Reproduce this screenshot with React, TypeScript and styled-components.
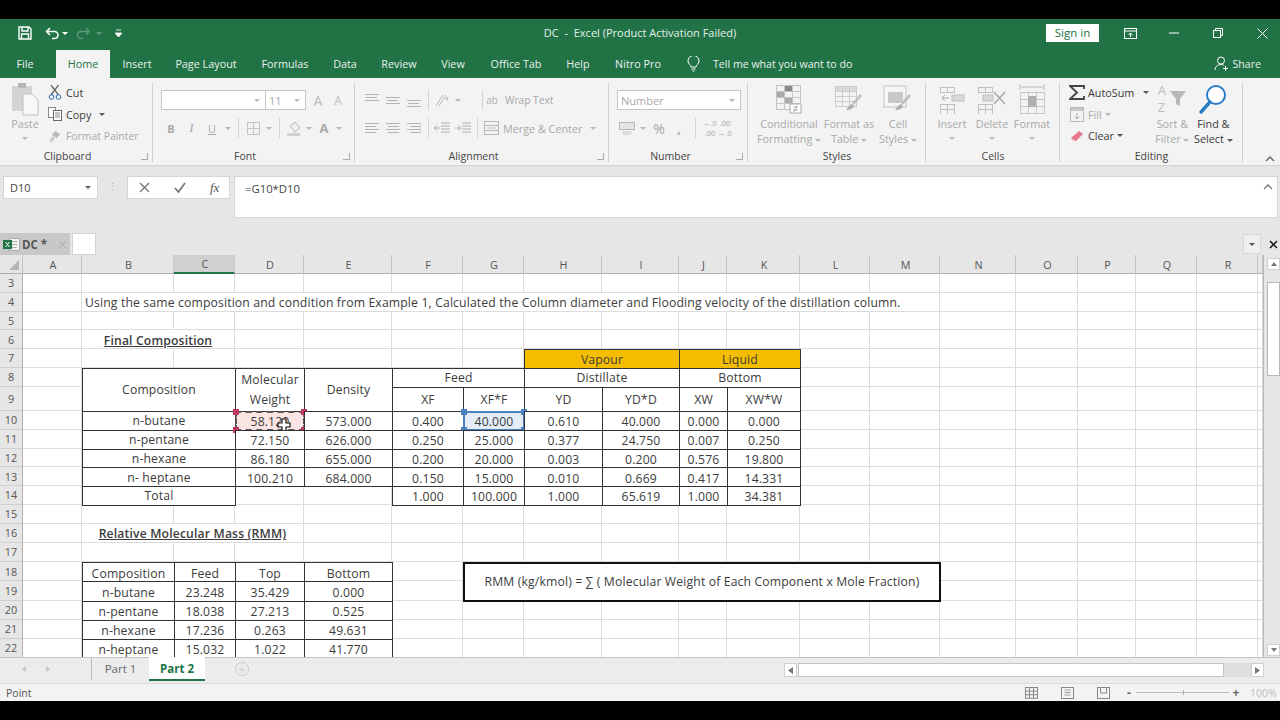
import * as React from "react";
import styled, { createGlobalStyle } from "styled-components";

const UI = `"Open Sans", "Noto Sans", sans-serif`;
const SHEET = `"Open Sans", "Noto Sans", sans-serif`;
const GREEN = "#217346";
const FADED = "#a9a9a9";
const ICON = "#bdbdbd";

const Global = createGlobalStyle`
  html, body { margin: 0; padding: 0; background: #000; }
  body { font-family: ${UI}; width: 1280px; height: 720px; overflow: hidden; }
`;

const Frame = styled.div`
  width: 1280px;
  height: 720px;
  display: flex;
  flex-direction: column;
  background: #000;
  padding: 19px 0;
  box-sizing: border-box;
`;

const Window = styled.div`
  height: 682px;
  display: flex;
  flex-direction: column;
  background: #e6e6e6;
  overflow: hidden;
`;

/* ---- title bar ---- */
const TitleBar = styled.div`
  height: 28px;
  background: ${GREEN};
  display: grid;
  grid-template-columns: 1fr auto 1fr;
  align-items: center;
  color: #fff;
`;

const Qat = styled.div`
  display: flex;
  align-items: center;
  padding-left: 16px;
`;

const QatSlot = styled.div<{ $w: number }>`
  width: ${(p) => p.$w}px;
  display: flex;
  align-items: center;
  justify-content: center;
`;

const TitleText = styled.div`
  font-size: 11px;
  color: #e6f0ea;
  white-space: pre;
  margin-top: -1px;
`;

const WinControls = styled.div`
  display: flex;
  align-items: center;
  justify-content: flex-end;
  margin-right: -4px;
`;

const SignIn = styled.div`
  width: 53px;
  height: 18px;
  background: #fff;
  color: ${GREEN};
  font-size: 11.5px;
  line-height: 18px;
  text-align: center;
  margin-right: 9px;
`;

const WinSlot = styled.div`
  width: 44px;
  display: flex;
  justify-content: center;
  align-items: center;
`;

/* ---- tab row ---- */
const TabRow = styled.div`
  height: 31px;
  background: ${GREEN};
  display: flex;
  align-items: flex-end;
`;

const RibbonTab = styled.div<{ $w: number; $active?: boolean; $gap?: number }>`
  width: ${(p) => p.$w}px;
  margin-right: ${(p) => p.$gap ?? 0}px;
  height: 28px;
  line-height: 27px;
  text-align: center;
  font-size: 10.8px;
  color: ${(p) => (p.$active ? GREEN : "#e8f1ec")};
  background: ${(p) => (p.$active ? "#f3f3f3" : "transparent")};
`;

const TellMe = styled.div`
  height: 28px;
  display: flex;
  align-items: center;
  gap: 13px;
  margin-left: 11px;
  font-size: 10.6px;
  color: #e8f1ec;
  padding-bottom: 1px;
  box-sizing: border-box;
`;

const Share = styled.div`
  margin-left: auto;
  margin-right: 19px;
  height: 28px;
  display: flex;
  align-items: center;
  gap: 4px;
  font-size: 10.6px;
  color: #e8f1ec;
  padding-bottom: 1px;
  box-sizing: border-box;
`;

/* ---- ribbon ---- */
const Ribbon = styled.div`
  height: 87px;
  background: #f3f3f3;
  display: flex;
  padding-top: 3px;
  box-sizing: border-box;
  box-shadow: 0 1px 1px #d4d4d4;
  font-size: 10.8px;
  color: ${FADED};
`;

const Group = styled.div<{ $w: number }>`
  width: ${(p) => p.$w}px;
  height: 84px;
  display: flex;
  flex-direction: column;
  position: relative;
  flex: none;
  &::after {
    content: "";
    position: absolute;
    right: 0;
    top: 2px;
    bottom: 3px;
    width: 1px;
    background: #d0d0d0;
  }
`;

const GroupBody = styled.div<{ $pl?: number; $pt?: number }>`
  height: 66px;
  display: flex;
  padding-left: ${(p) => p.$pl ?? 0}px;
  padding-top: ${(p) => p.$pt ?? 0}px;
  box-sizing: border-box;
`;

const GroupLabel = styled.div<{ $pr?: number }>`
  height: 18px;
  line-height: 18px;
  font-size: 10.5px;
  color: #444;
  text-align: center;
  position: relative;
  padding-right: ${(p) => p.$pr ?? 0}px;
`;

const Launcher = styled.span`
  position: absolute;
  right: 5px;
  top: 6px;
  width: 6px;
  height: 6px;
  border-right: 1px solid #aaa;
  border-bottom: 1px solid #aaa;
`;

const Stack = styled.div<{ $gap?: number; $ml?: number }>`
  display: flex;
  flex-direction: column;
  gap: ${(p) => p.$gap ?? 0}px;
  margin-left: ${(p) => p.$ml ?? 0}px;
`;

const ToolRow = styled.div<{ $h?: number }>`
  height: ${(p) => p.$h ?? 20}px;
  display: flex;
  align-items: center;
  white-space: nowrap;
`;

const Slot = styled.div<{ $w: number; $ml?: number }>`
  width: ${(p) => p.$w}px;
  margin-left: ${(p) => p.$ml ?? 0}px;
  flex: none;
  display: flex;
  align-items: center;
  justify-content: center;
`;

const Glyph = styled(Slot)<{ $size?: number; $bold?: boolean; $italic?: boolean; $under?: boolean; $c?: string }>`
  color: ${(p) => p.$c ?? "#aaa"};
  font-size: ${(p) => p.$size ?? 11}px;
  font-weight: ${(p) => (p.$bold ? 700 : 400)};
  font-style: ${(p) => (p.$italic ? "italic" : "normal")};
  text-decoration: ${(p) => (p.$under ? "underline" : "none")};
  font-family: ${(p) => (p.$italic ? `"Liberation Serif", serif` : "inherit")};
`;

const Decimals = styled(Slot)`
  color: #a8a8a8;
  font-size: 7.5px;
  line-height: 10px;
  text-align: center;
`;

const AbMark = styled.span`
  color: #b0b0b0;
  font-size: 10px;
  width: 18px;
  text-align: center;
`;

const ToolText = styled.span<{ $on?: boolean; $ml?: number; $size?: number }>`
  color: ${(p) => (p.$on ? "#3a3a3a" : FADED)};
  margin-left: ${(p) => p.$ml ?? 0}px;
  font-size: ${(p) => p.$size ?? 10.8}px;
`;

const Caret = styled.span<{ $dark?: boolean; $ml?: number; $mt?: number; $c?: string }>`
  display: inline-block;
  width: 0;
  height: 0;
  border-left: 3px solid transparent;
  border-right: 3px solid transparent;
  border-top: 3px solid ${(p) => p.$c ?? (p.$dark ? "#555" : "#b8b8b8")};
  margin-left: ${(p) => p.$ml ?? 0}px;
  margin-top: ${(p) => p.$mt ?? 0}px;
  vertical-align: middle;
`;

const VSep = styled.div<{ $ml?: number; $mr?: number }>`
  width: 1px;
  height: 20px;
  background: #d4d4d4;
  margin-left: ${(p) => p.$ml ?? 0}px;
  margin-right: ${(p) => p.$mr ?? 0}px;
  flex: none;
`;

const ComboBox = styled.div<{ $w: number }>`
  width: ${(p) => p.$w}px;
  height: 20px;
  box-sizing: border-box;
  background: #fff;
  border: 1px solid #c6c6c6;
  display: flex;
  align-items: center;
  justify-content: space-between;
  padding: 0 5px 0 3px;
  color: ${FADED};
  font-size: 11px;
  margin-right: -1px;
`;

const Big = styled.div<{ $w: number; $on?: boolean; $ml?: number }>`
  width: ${(p) => p.$w}px;
  margin-left: ${(p) => p.$ml ?? 0}px;
  flex: none;
  display: flex;
  flex-direction: column;
  align-items: center;
  color: ${(p) => (p.$on ? "#3a3a3a" : FADED)};
  line-height: 15px;
  white-space: nowrap;
  font-size: 10.8px;
`;

const BigIcon = styled.div`
  height: 35px;
  display: flex;
  align-items: center;
  justify-content: center;
`;

const SortLetters = styled.div`
  display: flex;
  flex-direction: column;
  font-size: 13px;
  line-height: 17px;
  color: ${ICON};
  width: 11px;
`;

const CollapseSlot = styled.div`
  flex: 1;
  position: relative;
  display: flex;
  justify-content: flex-end;
  align-items: flex-end;
  padding: 0 5px 3px 0;
`;

/* ---- formula bar ---- */
const FormulaArea = styled.div`
  height: 68px;
  display: flex;
  align-items: flex-start;
  padding: 11px 2px 0 3px;
  box-sizing: border-box;
`;

const NameBox = styled.div`
  width: 95px;
  height: 23px;
  background: #fff;
  border: 1px solid #d6d6d6;
  box-sizing: border-box;
  display: flex;
  align-items: center;
  justify-content: space-between;
  padding: 0 6px;
  font-size: 11px;
  color: #444;
`;

const Dots = styled.div`
  width: 29px;
  text-align: center;
  color: #b5b5b5;
  font-size: 11px;
  line-height: 21px;
  letter-spacing: 1px;
`;

const FxBox = styled.div`
  width: 103px;
  height: 23px;
  background: #fff;
  border: 1px solid #d6d6d6;
  box-sizing: border-box;
  display: flex;
  align-items: center;
  padding-left: 11px;
  gap: 24px;
  margin-right: 4px;
`;

const FxText = styled.span`
  font-family: "Liberation Serif", serif;
  font-style: italic;
  font-size: 13px;
  color: #555;
`;

const FormulaInput = styled.div`
  flex: 1;
  height: 42px;
  background: #fff;
  border: 1px solid #d6d6d6;
  box-sizing: border-box;
  padding: 4px 10px;
  font-size: 11.3px;
  line-height: 15px;
  color: #444;
  display: flex;
  justify-content: space-between;
`;

const FormulaCollapse = styled.svg`
  margin: 3px -6px 0 0;
`;

/* ---- workbook tabs ---- */
const BookTabs = styled.div`
  height: 22px;
  display: flex;
  align-items: stretch;
`;

const BookTab = styled.div`
  width: 70px;
  background: #c8c8c8;
  display: flex;
  align-items: center;
  gap: 2px;
  padding-left: 3px;
  box-sizing: border-box;
  font-size: 11.5px;
  font-weight: 700;
  color: #555;
`;

const BookClose = styled.svg`
  margin-left: 9px;
`;

const NewTab = styled.div`
  width: 24px;
  margin-left: 2px;
  background: #fff;
  border: 1px solid #d4d4d4;
  box-sizing: border-box;
`;

const BookRight = styled.div`
  margin-left: auto;
  display: flex;
  align-items: center;
`;

const BookBtn = styled.div`
  width: 18px;
  height: 20px;
  border: 1px solid #d8d8d8;
  background: #f0f0f0;
  display: flex;
  align-items: center;
  justify-content: center;
  margin-right: 2px;
  box-sizing: border-box;
`;

const BookX = styled.svg`
  margin: 0 2px 0 6px;
`;

/* ---- sheet ---- */
const SheetRow = styled.div`
  height: 402px;
  display: flex;
  background: #e6e6e6;
`;

const Sheet = styled.div<{ $cols: string; $rows: string }>`
  width: 1263px;
  height: 402px;
  overflow: hidden;
  display: grid;
  grid-template-columns: ${(p) => p.$cols};
  grid-template-rows: ${(p) => p.$rows};
  background: #fff;
  font-family: ${SHEET};
  font-size: 12.2px;
  letter-spacing: 0.15px;
  color: #3c3c3c;
  flex: none;
  border-right: 1px solid #b5b5b5;
  box-sizing: content-box;
`;

const Corner = styled.div`
  background: #e6e6e6;
  border-right: 1px solid #c4c4c4;
  border-bottom: 1px solid #b0b0b0;
  box-sizing: border-box;
  display: flex;
  align-items: flex-end;
  justify-content: flex-end;
  padding: 0 3px 3px 0;
`;

const ColHead = styled.div<{ $on?: boolean }>`
  background: ${(p) => (p.$on ? "#d0d0d0" : "#e6e6e6")};
  border-right: 1px solid #c4c4c4;
  border-bottom: ${(p) => (p.$on ? `2px solid ${GREEN}` : "1px solid #b0b0b0")};
  box-sizing: border-box;
  font-size: 10.8px;
  letter-spacing: 0;
  padding-left: 2px;
  color: #555;
  display: flex;
  align-items: center;
  justify-content: center;
`;

const RowHead = styled.div`
  background: #e6e6e6;
  border-right: 1px solid #b0b0b0;
  border-bottom: 1px solid #cfcfcf;
  box-sizing: border-box;
  font-size: 10.8px;
  letter-spacing: 0;
  color: #555;
  display: flex;
  align-items: center;
  justify-content: center;
`;

const Cell = styled.div<{
  $box?: boolean;
  $thick?: boolean;
  $bold?: boolean;
  $left?: boolean;
  $snug?: boolean;
  $bg?: string;
}>`
  position: relative;
  box-sizing: border-box;
  min-width: 0;
  display: flex;
  align-items: center;
  justify-content: ${(p) => (p.$left ? "flex-start" : "center")};
  padding-left: ${(p) => (p.$left ? "3px" : "0")};
  padding-top: ${(p) => (p.$snug ? "0" : "2px")};
  white-space: nowrap;
  overflow: visible;
  font-weight: ${(p) => (p.$bold ? 600 : 400)};
  background: ${(p) => p.$bg ?? "#fff"};
  ${(p) =>
    p.$thick
      ? "border: 2px solid #111; margin: 0 -1px -1px 0; z-index: 2;"
      : p.$box
        ? "border: 1px solid #333; margin: 0 -1px -1px 0; z-index: 1;"
        : "border-right: 1px solid #dcdcdc; border-bottom: 1px solid #dcdcdc;"}
`;

const Underlined = styled.span`
  text-decoration: underline;
`;

const TwoLine = styled.span`
  text-align: center;
  line-height: 20px;
`;

const Ants = styled.div`
  position: absolute;
  inset: -1px;
  border: 2px dashed #555;
  box-sizing: border-box;
  pointer-events: none;
`;

const Picked = styled.div`
  position: absolute;
  inset: -1px;
  border: 2px solid #4a7fc1;
  box-sizing: border-box;
`;

const Handle = styled.span<{ $c: string; $x: "l" | "r"; $y: "t" | "b" }>`
  position: absolute;
  width: 6px;
  height: 6px;
  background: ${(p) => p.$c};
  ${(p) => (p.$x === "l" ? "left: -4px;" : "right: -4px;")}
  ${(p) => (p.$y === "t" ? "top: -4px;" : "bottom: -4px;")}
`;

const Pointer = styled.svg`
  position: absolute;
  left: 41px;
  top: 6px;
  z-index: 5;
`;

/* ---- scrollbars ---- */
const VScroll = styled.div`
  flex: 1;
  padding: 3px 0 1px 3px;
  display: flex;
  flex-direction: column;
  box-sizing: border-box;
`;

const ScrollBtn = styled.div`
  height: 12px;
  background: #fff;
  border: 1px solid #d0d0d0;
  box-sizing: border-box;
  display: flex;
  align-items: center;
  justify-content: center;
  flex: none;
`;

const VThumb = styled.div`
  height: 94px;
  margin-top: 12px;
  background: #fff;
  border: 1px solid #b8b8b8;
  box-sizing: border-box;
`;

const Up = styled.span`
  border-left: 3px solid transparent;
  border-right: 3px solid transparent;
  border-bottom: 4px solid #777;
`;

const Down = styled.span`
  border-left: 3px solid transparent;
  border-right: 3px solid transparent;
  border-top: 4px solid #777;
`;

const VGap = styled.div`
  flex: 1;
`;

/* ---- sheet tabs ---- */
const BottomBar = styled.div`
  height: 26px;
  display: flex;
  background: #ececec;
  align-items: flex-start;
  box-shadow: inset 0 1px #c4c4c4;
`;

const NavArrows = styled.div`
  width: 92px;
  height: 22px;
  display: flex;
  align-items: center;
  padding-left: 22px;
  gap: 20px;
  box-sizing: border-box;
  border-right: 1px solid #bbb;
  margin-top: 1px;
`;

const NavArrow = styled.span<{ $dir: "l" | "r" }>`
  border-top: 3px solid transparent;
  border-bottom: 3px solid transparent;
  ${(p) => (p.$dir === "l" ? "border-right" : "border-left")}: 4px solid #c4c4c4;
`;

const SheetTab = styled.div<{ $active?: boolean; $w: number }>`
  width: ${(p) => p.$w}px;
  height: 24px;
  box-sizing: border-box;
  text-align: center;
  line-height: 23px;
  font-size: 11.5px;
  color: ${(p) => (p.$active ? GREEN : "#666")};
  font-weight: ${(p) => (p.$active ? 700 : 400)};
  background: ${(p) => (p.$active ? "#fff" : "transparent")};
  border-bottom: ${(p) => (p.$active ? `2px solid ${GREEN}` : "none")};
`;

const AddSheet = styled.div`
  margin: 5px 0 0 30px;
  width: 14px;
  height: 14px;
  border: 1px solid #ccc;
  border-radius: 50%;
  color: #ccc;
  font-size: 13px;
  line-height: 12px;
  text-align: center;
  box-sizing: border-box;
`;

const HScroll = styled.div`
  margin: 6px 0 0 535px;
  height: 14px;
  display: flex;
  align-items: stretch;
  width: 480px;
`;

const HBtn = styled.div`
  width: 13px;
  background: #fff;
  border: 1px solid #d0d0d0;
  box-sizing: border-box;
  display: flex;
  align-items: center;
  justify-content: center;
  flex: none;
`;

const HThumb = styled.div`
  width: 426px;
  margin-left: 1px;
  background: #fff;
  border: 1px solid #c4c4c4;
  box-sizing: border-box;
`;

const HTrack = styled.div`
  flex: 1;
  background: #dedede;
`;

/* ---- status bar ---- */
const StatusBar = styled.div`
  height: 18px;
  background: #f3f3f3;
  display: flex;
  align-items: center;
  padding-left: 6px;
  font-size: 10.5px;
  color: #555;
  border-top: 1px solid #dcdcdc;
  box-sizing: border-box;
`;

const StatusRight = styled.div`
  margin-left: auto;
  display: flex;
  align-items: center;
  padding-right: 2px;
`;

const ZoomTrack = styled.div`
  width: 93px;
  height: 1px;
  background: #bbb;
  margin: 0 3px;
  position: relative;
  &::after {
    content: "";
    position: absolute;
    left: 47px;
    top: -2px;
    width: 1px;
    height: 5px;
    background: #aaa;
  }
`;

const ZoomSign = styled.span`
  font-weight: 700;
  color: #666;
  font-size: 12px;
  width: 8px;
  text-align: center;
`;

const ZoomPct = styled.span`
  color: #bdbdbd;
  font-size: 10.5px;
  margin-left: 10px;
  width: 28px;
`;

const Line = styled.span`
  display: block;
`;

/* ---- icons ---- */
const S = ({ w, h, children }: { w: number; h: number; children: React.ReactNode }) => (
  <svg width={w} height={h} viewBox={`0 0 ${w} ${h}`} fill="none">
    {children}
  </svg>
);

const Lines = ({ rows }: { rows: [number, number][] }) => (
  <S w={15} h={14}>
    {rows.map(([x, y], i) => (
      <rect key={i} x={x} y={y} width={i % 2 ? 11 : 14} height={1} fill="#b4b4b4" />
    ))}
  </S>
);

const tableGrid = (x: number, y: number, cw: number, ch: number, nx: number, ny: number, c: string) => {
  const out: React.ReactNode[] = [];
  for (let i = 0; i <= nx; i++) out.push(<rect key={`v${i}`} x={x + i * cw} y={y} width={1} height={ch * ny} fill={c} />);
  for (let j = 0; j <= ny; j++) out.push(<rect key={`h${j}`} x={x} y={y + j * ch} width={cw * nx + 1} height={1} fill={c} />);
  return out;
};

const PasteIcon = () => (
  <S w={28} h={34}>
    <rect x="1" y="4" width="20" height="25" fill="#d4d4d4" />
    <rect x="7" y="1" width="8" height="5" fill="#b6b6b6" />
    <path d="M12 12h9l6 6v15H12z" fill="#f8f8f8" stroke="#c0c0c0" />
  </S>
);

const ConditionalIcon = () => (
  <S w={28} h={30}>
    <rect x="2" y="8" width="8" height="6" fill="#aaa" />
    <rect x="9" y="13" width="9" height="6" fill="#aaa" />
    <rect x="9" y="2" width="9" height="6" fill="#888" />
    {tableGrid(1, 1, 8, 6, 3, 4, "#c4c4c4")}
    <rect x="15" y="20" width="11" height="9" fill="#fff" stroke="#aaa" />
    <path d="M18 23h5M18 26h5M19 28l3-6" stroke="#999" strokeWidth=".8" />
  </S>
);

const TableIcon = () => (
  <S w={30} h={30}>
    <rect x="1" y="2" width="22" height="6" fill="#d8d8d8" />
    {tableGrid(1, 2, 7, 5, 3, 4, "#ccc")}
    <path d="M28 12l-8 9-2-2 8-9z" fill="#c0c0c0" />
    <path d="M18 20c-3 1-4 3-6 6 4 0 7-1 8-4z" fill="#b0b0b0" />
  </S>
);

const StylesIcon = () => (
  <S w={30} h={30}>
    <rect x="1" y="2" width="22" height="21" fill="#f6f6f6" stroke="#c4c4c4" />
    <rect x="5" y="8" width="15" height="11" fill="#c8c8c8" />
    <path d="M28 12l-8 9-2-2 8-9z" fill="#c0c0c0" />
    <path d="M18 20c-3 1-4 3-6 6 4 0 7-1 8-4z" fill="#b0b0b0" />
  </S>
);

const InsertIcon = () => (
  <S w={28} h={30}>
    {tableGrid(2, 3, 7, 5, 2, 1, "#c0c0c0")}
    {tableGrid(2, 20, 7, 5, 2, 2, "#c0c0c0")}
    <rect x="14" y="11" width="12" height="6" fill="#d8d8d8" stroke="#c0c0c0" />
    <path d="M11 14H4M7 11l-3 3 3 3" stroke="#aaa" />
  </S>
);

const DeleteIcon = () => (
  <S w={30} h={30}>
    {tableGrid(1, 3, 7, 5, 2, 1, "#c0c0c0")}
    {tableGrid(1, 20, 7, 5, 2, 2, "#c0c0c0")}
    <rect x="6" y="11" width="10" height="6" fill="#d8d8d8" stroke="#c0c0c0" />
    <path d="M17 8l11 12M28 8L17 20" stroke="#aaa" strokeWidth="1.6" />
  </S>
);

const FormatIcon = () => (
  <S w={28} h={32}>
    <path d="M2 1v6M26 1v6M3 4h22" stroke="#b8b8b8" />
    {tableGrid(2, 9, 8, 7, 3, 3, "#c8c8c8")}
    <rect x="10" y="13" width="8" height="11" fill="#b0b0b0" />
  </S>
);

const FunnelIcon = () => (
  <S w={18} h={18}>
    <path d="M1 1h16l-6 8v7l-4-2V9z" fill="#b8b8b8" />
  </S>
);

const FindIcon = () => (
  <S w={30} h={32}>
    <circle cx="18" cy="12" r="9" stroke="#2b7cc4" strokeWidth="2" fill="#fff" />
    <path d="M12 19L3 29" stroke="#2b7cc4" strokeWidth="3.4" strokeLinecap="round" />
  </S>
);

const SigmaIcon = () => (
  <S w={16} h={15}>
    <path d="M15 4V1H1l7 6.500L1 14h14v-3" stroke="#444" strokeWidth="1.8" />
  </S>
);

const Scissors = () => (
  <S w={14} h={15}>
    <path d="M3 0l7.500 10M10.500 0L3 10" stroke="#666" strokeWidth="1.3" />
    <circle cx="3.500" cy="12" r="2.300" stroke="#2b6cb5" />
    <circle cx="10.500" cy="12" r="2.300" stroke="#2b6cb5" />
  </S>
);

const CopyIcon = () => (
  <S w={14} h={14}>
    <rect x=".5" y=".5" width="7" height="10" fill="#fff" stroke="#888" />
    <rect x="5.5" y="3.5" width="8" height="10" fill="#fff" stroke="#666" />
    <path d="M7 6h5M7 8h5M7 10h5" stroke="#888" />
  </S>
);

const PainterIcon = () => (
  <S w={14} h={14}>
    <path d="M7 2l5 3-3 4-5-3z" fill="#bbb" />
    <path d="M5 7L1 12l3 1 3-4z" fill="#c8c8c8" />
  </S>
);

export default function App() {
  const colW = [59, 92, 61, 69, 88, 71, 61, 78, 77, 48, 73, 70, 70, 76, 62, 58, 61, 61, 5];
  const colNames = "ABCDEFGHIJKLMNOPQR".split("").concat([""]);
  const rowH = [18.75, 18.75, 18.75, 18.75, 18.75, 18.75, 24.5, 18.75, 18.75, 18.75, 18.75, 18.75, 19.25, 18.75, 19.25, 19, 19.5, 19, 19, 19];
  const cols = "23px " + colW.map((w) => `${w}px`).join(" ");
  const rows = "19px " + rowH.map((h) => `${h}px`).join(" ");

  type Spec = {
    c: number;
    r: number;
    cs?: number;
    rs?: number;
    t?: React.ReactNode;
    box?: boolean;
    thick?: boolean;
    bold?: boolean;
    left?: boolean;
    snug?: boolean;
    bg?: string;
    over?: React.ReactNode;
  };

  const orange = "#f5bd00";
  const specs: Spec[] = [
    { c: 1, r: 4, cs: 12, left: true, t: "Using the same composition and condition from Example 1, Calculated the Column diameter and Flooding velocity of the distillation column." },
    { c: 1, r: 6, cs: 2, bold: true, t: <Underlined>Final Composition</Underlined> },
    { c: 7, r: 7, cs: 2, box: true, bg: orange, t: "Vapour" },
    { c: 9, r: 7, cs: 2, box: true, bg: orange, t: "Liquid" },
    { c: 1, r: 8, cs: 2, rs: 2, box: true, snug: true, t: "Composition" },
    { c: 3, r: 8, rs: 2, box: true, snug: true, t: <TwoLine><Line>Molecular</Line><Line>Weight</Line></TwoLine> },
    { c: 4, r: 8, rs: 2, box: true, snug: true, t: "Density" },
    { c: 5, r: 8, cs: 2, box: true, snug: true, t: "Feed" },
    { c: 7, r: 8, cs: 2, box: true, snug: true, t: "Distillate" },
    { c: 9, r: 8, cs: 2, box: true, snug: true, t: "Bottom" },
    ...["XF", "XF*F", "YD", "YD*D", "XW", "XW*W"].map((t, i) => ({ c: 5 + i, r: 9, box: true, snug: true, t })),
    { c: 1, r: 16, cs: 3, bold: true, t: <Underlined>Relative Molecular Mass (RMM)</Underlined> },
    { c: 6, r: 18, cs: 7, rs: 2, thick: true, snug: true, t: "RMM (kg/kmol) = ∑ ( Molecular Weight of Each Component x Mole Fraction)" },
  ];

  const names = ["n-butane", "n-pentane", "n-hexane", "n- heptane", "Total"];
  names.forEach((t, i) => specs.push({ c: 1, r: 10 + i, cs: 2, box: true, snug: true, t }));

  const body = [
    ["58.120", "573.000", "0.400", "40.000", "0.610", "40.000", "0.000", "0.000"],
    ["72.150", "626.000", "0.250", "25.000", "0.377", "24.750", "0.007", "0.250"],
    ["86.180", "655.000", "0.200", "20.000", "0.003", "0.200", "0.576", "19.800"],
    ["100.210", "684.000", "0.150", "15.000", "0.010", "0.669", "0.417", "14.331"],
    ["", "", "1.000", "100.000", "1.000", "65.619", "1.000", "34.381"],
  ];
  body.forEach((row, i) =>
    row.forEach((t, j) => {
      if (i === 4 && j < 2) return;
      const spec: Spec = { c: 3 + j, r: 10 + i, box: true, t };
      if (i === 0 && j === 0) {
        spec.bg = "#f9e6e4";
        spec.over = (
          <>
            <Ants>
              <Handle $c="#c2365a" $x="l" $y="t" />
              <Handle $c="#c2365a" $x="r" $y="t" />
              <Handle $c="#c2365a" $x="l" $y="b" />
              <Handle $c="#c2365a" $x="r" $y="b" />
            </Ants>
            <Pointer width="14" height="14" viewBox="0 0 14 14">
              <path d="M5 1h4v4h4v4H9v4H5V9H1V5h4z" fill="#fff" stroke="#111" strokeWidth="1.2" />
            </Pointer>
          </>
        );
      }
      if (i === 0 && j === 3) {
        spec.bg = "#e3ecf7";
        spec.over = (
          <Picked>
            <Handle $c="#4a7fc1" $x="l" $y="t" />
            <Handle $c="#4a7fc1" $x="r" $y="t" />
            <Handle $c="#4a7fc1" $x="l" $y="b" />
            <Handle $c="#4a7fc1" $x="r" $y="b" />
          </Picked>
        );
      }
      specs.push(spec);
    })
  );

  const rmm = [
    ["Composition", "Feed", "Top", "Bottom"],
    ["n-butane", "23.248", "35.429", "0.000"],
    ["n-pentane", "18.038", "27.213", "0.525"],
    ["n-hexane", "17.236", "0.263", "49.631"],
    ["n-heptane", "15.032", "1.022", "41.770"],
  ];
  rmm.forEach((row, i) => row.forEach((t, j) => specs.push({ c: 1 + j, r: 18 + i, box: true, t })));

  // which grid places are taken by a spec
  const taken = new Set<string>();
  specs.forEach((s) => {
    for (let x = s.c; x < s.c + (s.cs ?? 1); x++)
      for (let y = s.r; y < s.r + (s.rs ?? 1); y++) taken.add(`${x}:${y}`);
  });

  const blanks: Spec[] = [];
  for (let y = 3; y <= 22; y++)
    for (let x = 0; x < colW.length; x++) if (!taken.has(`${x}:${y}`)) blanks.push({ c: x, r: y });

  const tabs: [string, number, number?][] = [
    ["File", 50, 6],
    ["Home", 54],
    ["Insert", 54],
    ["Page Layout", 84],
    ["Formulas", 74],
    ["Data", 46],
    ["Review", 62],
    ["View", 46],
    ["Office Tab", 80],
    ["Help", 44],
    ["Nitro Pro", 76],
  ];

  return (
    <Frame>
      <Global />
      <Window>
        <TitleBar>
          <Qat>
            <QatSlot $w={18}>
              <svg width="14" height="14" viewBox="0 0 14 14" fill="none" stroke="#fff" strokeWidth="1.4">
                <path d="M1 1h10l2 2v10H1z" />
                <path d="M4 1v4h6V1M3.500 13V8h7v5" />
              </svg>
            </QatSlot>
            <QatSlot $w={10} />
            <QatSlot $w={18}>
              <svg width="16" height="13" viewBox="0 0 16 13" fill="none" stroke="#fff" strokeWidth="1.5">
                <path d="M5 1L1.500 4.500 5 8M2 4.500h7.500a3.500 3.500 0 0 1 0 7H7" />
              </svg>
            </QatSlot>
            <QatSlot $w={6}><Caret $c="#fff" /></QatSlot>
            <QatSlot $w={28}>
              <svg width="15" height="12" viewBox="0 0 15 12" fill="none" stroke="#5f9a7d" strokeWidth="1.4">
                <path d="M11 1l3 3.500L11 8M13.500 4.500H6a3.500 3.500 0 0 0 0 7h2" />
              </svg>
            </QatSlot>
            <QatSlot $w={6}><Caret $c="#5f9a7d" /></QatSlot>
            <QatSlot $w={32}>
              <svg width="7" height="8" viewBox="0 0 7 8"><path d="M1 1h5M0 4h7L3.500 8z" stroke="#fff" fill="#fff" strokeWidth=".8" /></svg>
            </QatSlot>
          </Qat>
          <TitleText>{"DC  -  Excel (Product Activation Failed)"}</TitleText>
          <WinControls>
            <SignIn>Sign in</SignIn>
            <WinSlot>
              <svg width="13" height="11" viewBox="0 0 13 11" fill="none" stroke="#fff">
                <rect x=".5" y=".5" width="12" height="10" />
                <path d="M.5 3h12M6.500 9V5M4.500 7l2-2 2 2" />
              </svg>
            </WinSlot>
            <WinSlot>
              <svg width="10" height="2" viewBox="0 0 10 2"><rect width="10" height="1" y=".5" fill="#fff" /></svg>
            </WinSlot>
            <WinSlot>
              <svg width="10" height="10" viewBox="0 0 10 10" fill="none" stroke="#fff">
                <rect x=".5" y="2.500" width="7" height="7" />
                <path d="M2.500 2.500v-2h7v7h-2" />
              </svg>
            </WinSlot>
            <WinSlot>
              <svg width="11" height="11" viewBox="0 0 11 11" stroke="#fff"><path d="M.5.5l10 10M10.500.5l-10 10" /></svg>
            </WinSlot>
          </WinControls>
        </TitleBar>

        <TabRow>
          {tabs.map(([t, w, gap]) => (
            <RibbonTab key={t} $w={w} $gap={gap} $active={t === "Home"}>
              {t}
            </RibbonTab>
          ))}
          <TellMe>
            <svg width="13" height="16" viewBox="0 0 13 16" fill="none" stroke="#fff">
              <path d="M4 11c0-2-3-3-3-6a5.500 5.500 0 0 1 11 0c0 3-3 4-3 6z" />
              <path d="M4.500 13h4M5.500 15h2" />
            </svg>
            Tell me what you want to do
          </TellMe>
          <Share>
            <svg width="15" height="15" viewBox="0 0 15 15" fill="none" stroke="#fff">
              <circle cx="7" cy="4.500" r="3.500" />
              <path d="M1 14c0-3 2.500-5.500 6-5.500 1 0 2 .2 2.800.7M11.500 10v5M9 12.500h5" />
            </svg>
            Share
          </Share>
        </TabRow>

        <Ribbon>
          <Group $w={153}>
            <GroupBody $pl={8}>
              <Big $w={34}>
                <BigIcon><PasteIcon /></BigIcon>
                Paste
                <Caret $mt={6} />
              </Big>
              <Stack $ml={5}>
                <ToolRow $h={22}><Slot $w={16}><Scissors /></Slot><ToolText $on $ml={3}>Cut</ToolText></ToolRow>
                <ToolRow $h={22}><Slot $w={16}><CopyIcon /></Slot><ToolText $on $ml={3}>Copy</ToolText><Caret $dark $ml={8} /></ToolRow>
                <ToolRow $h={21}><Slot $w={16}><PainterIcon /></Slot><ToolText $ml={3} $size={10.4}>Format Painter</ToolText></ToolRow>
              </Stack>
            </GroupBody>
            <GroupLabel $pr={18}>Clipboard<Launcher /></GroupLabel>
          </Group>

          <Group $w={202}>
            <GroupBody $pl={8} $pt={9}>
              <Stack $gap={8}>
                <ToolRow>
                  <ComboBox $w={105}><span /><Caret /></ComboBox>
                  <ComboBox $w={41}>11<Caret /></ComboBox>
                  <Glyph $w={22} $ml={2} $size={14} $c={ICON}>A</Glyph>
                  <Glyph $w={18} $size={12} $c={ICON}>A</Glyph>
                </ToolRow>
                <ToolRow>
                  <Glyph $w={20} $bold>B</Glyph>
                  <Glyph $w={21} $italic $size={13}>I</Glyph>
                  <Glyph $w={20} $under>U</Glyph>
                  <Slot $w={12}><Caret /></Slot>
                  <VSep $ml={4} $mr={4} />
                  <Slot $w={21}>
                    <S w={13} h={13}>{tableGrid(0, 0, 6, 6, 2, 2, "#c4c4c4")}</S>
                  </Slot>
                  <Slot $w={10}><Caret /></Slot>
                  <VSep $ml={5} $mr={5} />
                  <Slot $w={19}>
                    <S w={17} h={15}>
                      <path d="M4 5l5-4 5 6-5 4z" stroke="#b8b8b8" fill="#eee" />
                      <rect y="12" x="1" width="13" height="3" fill="#d0d0d0" />
                    </S>
                  </Slot>
                  <Slot $w={10}><Caret /></Slot>
                  <Glyph $w={20} $bold $size={13}>A</Glyph>
                  <Slot $w={10}><Caret /></Slot>
                </ToolRow>
              </Stack>
            </GroupBody>
            <GroupLabel $pr={18}>Font<Launcher /></GroupLabel>
          </Group>

          <Group $w={254}>
            <GroupBody $pl={7} $pt={9}>
              <Stack $gap={8}>
                <ToolRow>
                  <Slot $w={21}><Lines rows={[[0, 1], [1, 4], [0, 7]]} /></Slot>
                  <Slot $w={21}><Lines rows={[[0, 4], [1, 7], [0, 10]]} /></Slot>
                  <Slot $w={21}><Lines rows={[[0, 7], [1, 10], [0, 13]]} /></Slot>
                  <VSep $ml={3} />
                  <Slot $w={26}>
                    <S w={14} h={13}>
                      <path d="M1 12L8 1M4 12l7-11M10 5l3-2-1 4" stroke="#b8b8b8" />
                    </S>
                  </Slot>
                  <Caret />
                  <VSep $ml={21} />
                  <AbMark>ab</AbMark>
                  <ToolText $ml={4} $size={10.2}>Wrap Text</ToolText>
                </ToolRow>
                <ToolRow>
                  <Slot $w={21}><Lines rows={[[0, 2], [0, 5], [0, 8], [0, 11]]} /></Slot>
                  <Slot $w={21}><Lines rows={[[0, 2], [2, 5], [0, 8], [2, 11]]} /></Slot>
                  <Slot $w={21}><Lines rows={[[0, 2], [3, 5], [0, 8], [3, 11]]} /></Slot>
                  <VSep $ml={3} />
                  <Slot $w={26}>
                    <S w={16} h={12}>
                      <path d="M7 1h9M7 4h9M7 7h9M7 10h9M6 6H0M3 3.500L0 6l3 2.500" stroke="#b0b0b0" />
                    </S>
                  </Slot>
                  <Slot $w={16}>
                    <S w={16} h={12}>
                      <path d="M7 1h9M7 4h9M7 7h9M7 10h9M0 6h6M3 3.500L6 6 3 8.500" stroke="#b0b0b0" />
                    </S>
                  </Slot>
                  <VSep $ml={6} />
                  <Slot $w={16} $ml={5}>
                    <S w={15} h={14}>
                      <rect x=".5" y=".5" width="14" height="13" stroke="#b8b8b8" />
                      <path d="M.5 4.500h14M.5 9.500h14M3 7h9" stroke="#b8b8b8" />
                    </S>
                  </Slot>
                  <ToolText $ml={4}>Merge &amp; Center</ToolText>
                  <Caret $ml={8} />
                </ToolRow>
              </Stack>
            </GroupBody>
            <GroupLabel $pr={17}>Alignment<Launcher /></GroupLabel>
          </Group>

          <Group $w={139}>
            <GroupBody $pl={8} $pt={9}>
              <Stack $gap={8}>
                <ToolRow>
                  <ComboBox $w={124}>Number<Caret /></ComboBox>
                </ToolRow>
                <ToolRow>
                  <Slot $w={20}>
                    <S w={16} h={13}>
                      <rect x=".5" y=".5" width="15" height="7" stroke="#b8b8b8" fill="#e4e4e4" />
                      <path d="M3 10h10M4 12h8" stroke="#c8c8c8" />
                    </S>
                  </Slot>
                  <Slot $w={12}><Caret /></Slot>
                  <Glyph $w={20} $size={14} $c="#a4a4a4">%</Glyph>
                  <Glyph $w={20} $size={12} $bold $c="#a4a4a4">,</Glyph>
                  <VSep $ml={6} $mr={7} />
                  <Decimals $w={14}>←.0<br />.00</Decimals>
                  <Decimals $w={16}>.00<br />→.0</Decimals>
                </ToolRow>
              </Stack>
            </GroupBody>
            <GroupLabel $pr={16}>Number<Launcher /></GroupLabel>
          </Group>

          <Group $w={178}>
            <GroupBody $pl={7}>
              <Big $w={68}>
                <BigIcon><ConditionalIcon /></BigIcon>
                <Line>Conditional</Line>
                <Line>Formatting <Caret /></Line>
              </Big>
              <Big $w={52}>
                <BigIcon><TableIcon /></BigIcon>
                <Line>Format as</Line>
                <Line>Table <Caret /></Line>
              </Big>
              <Big $w={46}>
                <BigIcon><StylesIcon /></BigIcon>
                <Line>Cell</Line>
                <Line>Styles <Caret /></Line>
              </Big>
            </GroupBody>
            <GroupLabel>Styles</GroupLabel>
          </Group>

          <Group $w={134}>
            <GroupBody $pl={6}>
              <Big $w={40}>
                <BigIcon><InsertIcon /></BigIcon>
                Insert
                <Caret $mt={6} />
              </Big>
              <Big $w={40}>
                <BigIcon><DeleteIcon /></BigIcon>
                Delete
                <Caret $mt={6} />
              </Big>
              <Big $w={40}>
                <BigIcon><FormatIcon /></BigIcon>
                Format
                <Caret $mt={6} />
              </Big>
            </GroupBody>
            <GroupLabel>Cells</GroupLabel>
          </Group>

          <Group $w={183}>
            <GroupBody $pl={8}>
              <Stack>
                <ToolRow $h={22}>
                  <Slot $w={18}><SigmaIcon /></Slot>
                  <ToolText $on $ml={2}>AutoSum</ToolText>
                  <Caret $dark $ml={9} />
                </ToolRow>
                <ToolRow $h={22}>
                  <Slot $w={18}>
                    <S w={14} h={15}>
                      <rect x=".5" y=".5" width="13" height="14" stroke="#b8b8b8" />
                      <rect x="1" y="1" width="12" height="3" fill="#c8c8c8" />
                      <path d="M7 6v6M4.500 9.500L7 12l2.500-2.500" stroke="#aaa" />
                    </S>
                  </Slot>
                  <ToolText $ml={2}>Fill</ToolText>
                  <Caret $ml={3} />
                </ToolRow>
                <ToolRow $h={21}>
                  <Slot $w={18}>
                    <S w={14} h={12}>
                      <path d="M9 1l4 3-7 7-4-1-1-2z" fill="#e8798c" />
                      <path d="M1 8l4 3" stroke="#f3c3cb" />
                    </S>
                  </Slot>
                  <ToolText $on $ml={2}>Clear</ToolText>
                  <Caret $dark $ml={3} />
                </ToolRow>
              </Stack>
              <Big $w={40} $ml={3}>
                <BigIcon>
                  <SortLetters><span>A</span><span>Z</span></SortLetters>
                  <FunnelIcon />
                </BigIcon>
                <Line>Sort &amp;</Line>
                <Line>Filter <Caret /></Line>
              </Big>
              <Big $w={40} $ml={1} $on>
                <BigIcon><FindIcon /></BigIcon>
                <Line>Find &amp;</Line>
                <Line>Select <Caret $dark /></Line>
              </Big>
            </GroupBody>
            <GroupLabel>Editing</GroupLabel>
          </Group>

          <CollapseSlot>
            <svg width="10" height="6" viewBox="0 0 10 6" fill="none" stroke="#666" strokeWidth="1.4">
              <path d="M1 5l4-4 4 4" />
            </svg>
          </CollapseSlot>
        </Ribbon>

        <FormulaArea>
          <NameBox>D10<Caret $dark /></NameBox>
          <Dots>⋮</Dots>
          <FxBox>
            <svg width="11" height="11" viewBox="0 0 11 11" stroke="#777" strokeWidth="1.4"><path d="M1 1l9 9M10 1l-9 9" /></svg>
            <svg width="12" height="11" viewBox="0 0 12 11" fill="none" stroke="#777" strokeWidth="1.8"><path d="M1 6l3.500 4L11 1" /></svg>
            <FxText>fx</FxText>
          </FxBox>
          <FormulaInput>
            =G10*D10
            <FormulaCollapse width="10" height="6" viewBox="0 0 10 6" fill="none" stroke="#777" strokeWidth="1.4">
              <path d="M1 5l4-4 4 4" />
            </FormulaCollapse>
          </FormulaInput>
        </FormulaArea>

        <BookTabs>
          <BookTab>
            <svg width="17" height="13" viewBox="0 0 17 13">
              <rect x="6.500" y=".5" width="10" height="12" fill="#f4f4f4" stroke="#aaa" />
              <path d="M9 3.500h5M9 6.500h5M9 9.500h5" stroke="#aaa" />
              <rect x="0" y="2" width="9" height="9" fill="#217346" />
              <path d="M2.500 4l4 5M6.500 4l-4 5" stroke="#fff" />
            </svg>
            DC *
            <BookClose width="9" height="9" viewBox="0 0 9 9" stroke="#aaa"><path d="M1 1l7 7M8 1L1 8" /></BookClose>
          </BookTab>
          <NewTab />
          <BookRight>
            <BookBtn><Caret $dark /></BookBtn>
            <BookX width="9" height="9" viewBox="0 0 9 9" stroke="#222" strokeWidth="1.7"><path d="M1 1l7 7M8 1L1 8" /></BookX>
          </BookRight>
        </BookTabs>

        <SheetRow>
          <Sheet $cols={cols} $rows={rows}>
            <Corner>
              <svg width="10" height="10" viewBox="0 0 10 10"><path d="M10 0v10H0z" fill="#b5b5b5" /></svg>
            </Corner>
            {colNames.map((n, i) => (
              <ColHead key={i} $on={n === "C"}>{n}</ColHead>
            ))}
            {Array.from({ length: 20 }, (_, i) => (
              <RowHead key={i} style={{ gridColumn: 1, gridRow: i + 2 }}>{i + 3}</RowHead>
            ))}
            {[...blanks, ...specs].map((s, i) => (
              <Cell
                key={i}
                $box={s.box}
                $thick={s.thick}
                $bold={s.bold}
                $left={s.left}
                $snug={s.snug}
                $bg={s.bg}
                style={{
                  gridColumn: `${s.c + 2} / span ${s.cs ?? 1}`,
                  gridRow: `${s.r - 1} / span ${s.rs ?? 1}`,
                }}
              >
                {s.t}
                {s.over}
              </Cell>
            ))}
          </Sheet>
          <VScroll>
            <ScrollBtn><Up /></ScrollBtn>
            <VThumb />
            <VGap />
            <ScrollBtn><Down /></ScrollBtn>
          </VScroll>
        </SheetRow>

        <BottomBar>
          <NavArrows>
            <NavArrow $dir="l" />
            <NavArrow $dir="r" />
          </NavArrows>
          <SheetTab $w={57}>Part 1</SheetTab>
          <SheetTab $w={56} $active>Part 2</SheetTab>
          <AddSheet>+</AddSheet>
          <HScroll>
            <HBtn>
              <svg width="5" height="7" viewBox="0 0 5 7"><path d="M5 0v7L0 3.500z" fill="#777" /></svg>
            </HBtn>
            <HThumb />
            <HTrack />
            <HBtn>
              <svg width="5" height="7" viewBox="0 0 5 7"><path d="M0 0v7l5-3.500z" fill="#777" /></svg>
            </HBtn>
          </HScroll>
        </BottomBar>

        <StatusBar>
          Point
          <StatusRight>
            <Slot $w={36}>
              <S w={13} h={12}>{tableGrid(0, 0, 4, 3.6, 3, 3, "#888")}</S>
            </Slot>
            <Slot $w={36}>
              <S w={13} h={12}>
                <rect x=".5" y=".5" width="12" height="11" stroke="#888" />
                <path d="M3.500 3h6M3.500 5.500h6M3.500 8h6" stroke="#999" />
              </S>
            </Slot>
            <Slot $w={36}>
              <S w={13} h={12}>
                <rect x=".5" y=".5" width="12" height="11" stroke="#888" />
                <path d="M3.500 1v5h6V1" stroke="#888" />
              </S>
            </Slot>
            <Slot $w={4} />
            <ZoomSign>-</ZoomSign>
            <ZoomTrack />
            <ZoomSign>+</ZoomSign>
            <ZoomPct>100%</ZoomPct>
          </StatusRight>
        </StatusBar>
      </Window>
    </Frame>
  );
}
